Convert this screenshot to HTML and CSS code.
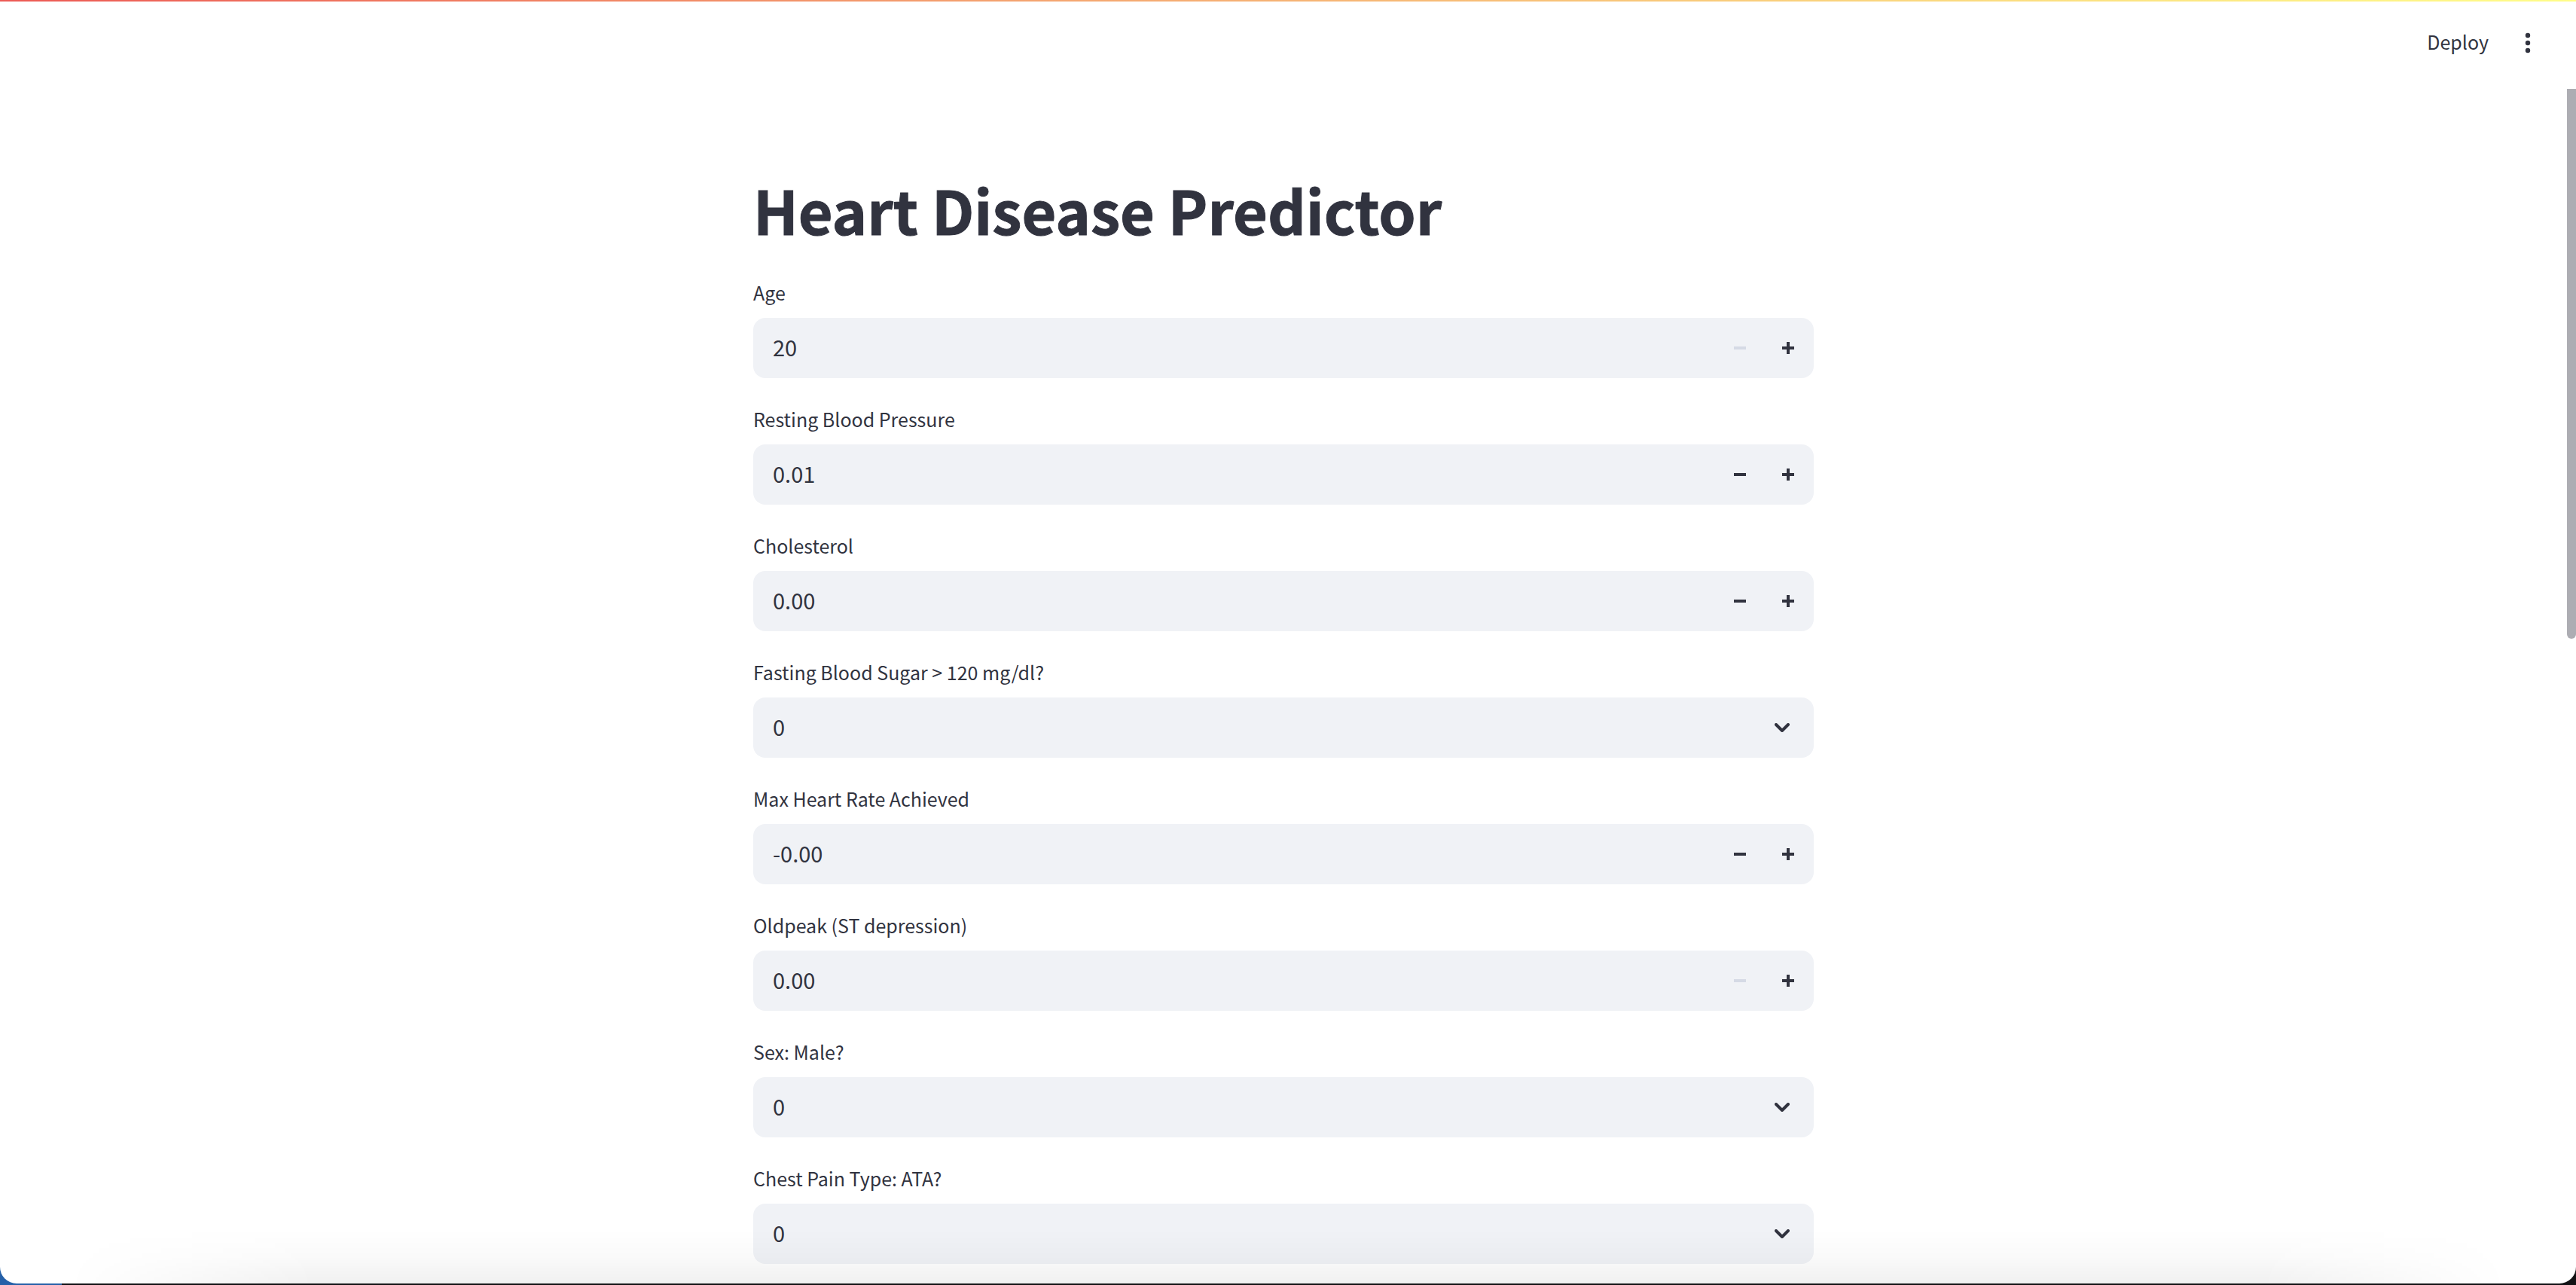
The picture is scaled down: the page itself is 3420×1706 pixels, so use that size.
FILE: index.html
```html
<!DOCTYPE html>
<html lang="en">
<head>
<meta charset="utf-8">
<meta name="viewport" content="width=device-width, initial-scale=1">
<title>Heart Disease Predictor</title>
<link rel="stylesheet" href="styles.css">
</head>
<body>
<svg class="sprite" aria-hidden="true">
  <symbol id="minus" viewBox="0 0 16 16"><path d="M0 6h16v4H0z"/></symbol>
  <symbol id="plus" viewBox="0 0 16 16"><path d="M6 0h4v6h6v4h-6v6H6v-6H0V6h6z"/></symbol>
  <symbol id="chevron" viewBox="0 0 20 12"><path d="M2 2l8 8 8-8" fill="none" stroke="currentColor" stroke-width="4" stroke-linecap="round" stroke-linejoin="round"/></symbol>
</svg>
<div class="window">
  <header class="header">
    <button class="deploy" type="button">Deploy</button>
    <button class="menu" type="button" aria-label="Main menu">
      <svg class="dots" viewBox="0 0 8 28"><circle cx="4" cy="4" r="3.2"/><circle cx="4" cy="14" r="3.2"/><circle cx="4" cy="24" r="3.2"/></svg>
    </button>
  </header>
  <div class="view">
    <main class="main">
      <form class="form">
        <h1 class="title">Heart Disease Predictor</h1>
        <div class="field">
          <label class="label" for="age">Age</label>
          <div class="box">
            <input class="value" id="age" type="text" inputmode="numeric" value="20">
            <button class="step" type="button" aria-label="Decrease age" disabled><svg class="sign"><use href="#minus"/></svg></button>
            <button class="step" type="button" aria-label="Increase age"><svg class="sign"><use href="#plus"/></svg></button>
          </div>
        </div>
        <div class="field">
          <label class="label" for="bp">Resting Blood Pressure</label>
          <div class="box">
            <input class="value" id="bp" type="text" inputmode="decimal" value="0.01">
            <button class="step" type="button" aria-label="Decrease blood pressure"><svg class="sign"><use href="#minus"/></svg></button>
            <button class="step" type="button" aria-label="Increase blood pressure"><svg class="sign"><use href="#plus"/></svg></button>
          </div>
        </div>
        <div class="field">
          <label class="label" for="chol">Cholesterol</label>
          <div class="box">
            <input class="value" id="chol" type="text" inputmode="decimal" value="0.00">
            <button class="step" type="button" aria-label="Decrease cholesterol"><svg class="sign"><use href="#minus"/></svg></button>
            <button class="step" type="button" aria-label="Increase cholesterol"><svg class="sign"><use href="#plus"/></svg></button>
          </div>
        </div>
        <div class="field">
          <label class="label" for="sugar">Fasting Blood Sugar &gt; 120 mg/dl?</label>
          <div class="box box-select">
            <select class="value" id="sugar"><option>0</option><option>1</option></select>
            <svg class="chevron"><use href="#chevron"/></svg>
          </div>
        </div>
        <div class="field">
          <label class="label" for="rate">Max Heart Rate Achieved</label>
          <div class="box">
            <input class="value" id="rate" type="text" inputmode="decimal" value="-0.00">
            <button class="step" type="button" aria-label="Decrease heart rate"><svg class="sign"><use href="#minus"/></svg></button>
            <button class="step" type="button" aria-label="Increase heart rate"><svg class="sign"><use href="#plus"/></svg></button>
          </div>
        </div>
        <div class="field">
          <label class="label" for="oldpeak">Oldpeak (ST depression)</label>
          <div class="box">
            <input class="value" id="oldpeak" type="text" inputmode="decimal" value="0.00">
            <button class="step" type="button" aria-label="Decrease oldpeak" disabled><svg class="sign"><use href="#minus"/></svg></button>
            <button class="step" type="button" aria-label="Increase oldpeak"><svg class="sign"><use href="#plus"/></svg></button>
          </div>
        </div>
        <div class="field">
          <label class="label" for="sex">Sex: Male?</label>
          <div class="box box-select">
            <select class="value" id="sex"><option>0</option><option>1</option></select>
            <svg class="chevron"><use href="#chevron"/></svg>
          </div>
        </div>
        <div class="field">
          <label class="label" for="ata">Chest Pain Type: ATA?</label>
          <div class="box box-select">
            <select class="value" id="ata"><option>0</option><option>1</option></select>
            <svg class="chevron"><use href="#chevron"/></svg>
          </div>
        </div>
      </form>
    </main>
    <div class="track"><div class="thumb"></div></div>
  </div>
  <div class="shade"></div>
</div>
</body>
</html>
```
FILE: styles.css
```css
* {
  box-sizing: border-box;
}

body {
  margin: 0;
  height: 100vh;
  padding-bottom: 2px;
  overflow: hidden;
  background: linear-gradient(90deg, #2560a8 82px, #121214 82px);
  color: #31333f;
  font-family: "Noto Sans CJK JP", "Noto Sans", sans-serif;
}

.sprite {
  display: none;
}

button,
input,
select {
  margin: 0;
  padding: 0;
  border: 0;
  background: none;
  color: inherit;
  font: inherit;
}

svg {
  fill: currentColor;
}

.window {
  position: relative;
  display: flex;
  flex-direction: column;
  height: 100%;
  overflow: hidden;
  border-radius: 0 0 22px 22px;
  background: #fff;
}

.header {
  display: flex;
  flex: none;
  align-items: center;
  justify-content: flex-end;
  gap: 32px;
  height: 118px;
  padding: 0 44px 4px 0;
  background: linear-gradient(90deg, #ec5a55, #f4a470 40%, #fffd88) top / 100% 2px no-repeat;
}

.deploy {
  padding-bottom: 4px;
  font-size: 25px;
  line-height: 40px;
}

.menu {
  display: flex;
  justify-content: center;
  width: 40px;
}

.dots {
  width: 8px;
  height: 28px;
}

.view {
  display: flex;
  flex: 1;
  min-height: 0;
}

.main {
  flex: 1;
  overflow: hidden;
}

.form {
  display: flex;
  flex-direction: column;
  gap: 32px;
  max-width: 1408px;
  margin: 0 auto;
  padding-top: 104px;
}

.title {
  margin: 0;
  font-size: 79px;
  font-weight: 700;
  line-height: 112px;
  -webkit-text-stroke: 1px currentColor;
}

.field {
  display: flex;
  flex-direction: column;
  gap: 12px;
}

.label {
  font-size: 25px;
  line-height: 44px;
}

.box {
  display: flex;
  height: 80px;
  padding-right: 2px;
  border-radius: 16px;
  background: #f0f2f6;
}

.value {
  flex: 1;
  min-width: 0;
  padding: 0 0 4px 26px;
  font-size: 29px;
  line-height: 48px;
  appearance: none;
}

.step {
  display: grid;
  place-items: center;
  width: 64px;
}

.step:disabled {
  color: #d5dae5;
}

.sign {
  width: 16px;
  height: 16px;
}

.box-select {
  display: grid;
  align-items: center;
  padding: 0;
}

.box-select > * {
  grid-area: 1 / 1;
}

.box-select .value {
  height: 100%;
}

.chevron {
  justify-self: end;
  width: 20px;
  height: 12px;
  margin-right: 32px;
  pointer-events: none;
}

.track {
  flex: none;
  width: 12px;
}

.thumb {
  height: 46%;
  border-radius: 0 0 6px 6px;
  background: #adadb3;
}

.shade {
  position: absolute;
  right: 0;
  bottom: 0;
  left: 0;
  height: 72px;
  background: linear-gradient(transparent, rgba(0, 0, 0, 0.02) 50%, rgba(0, 0, 0, 0.06));
  mask-image: linear-gradient(90deg, transparent 90px, #000 420px, #000 calc(100% - 420px), transparent calc(100% - 90px));
  pointer-events: none;
}
```
